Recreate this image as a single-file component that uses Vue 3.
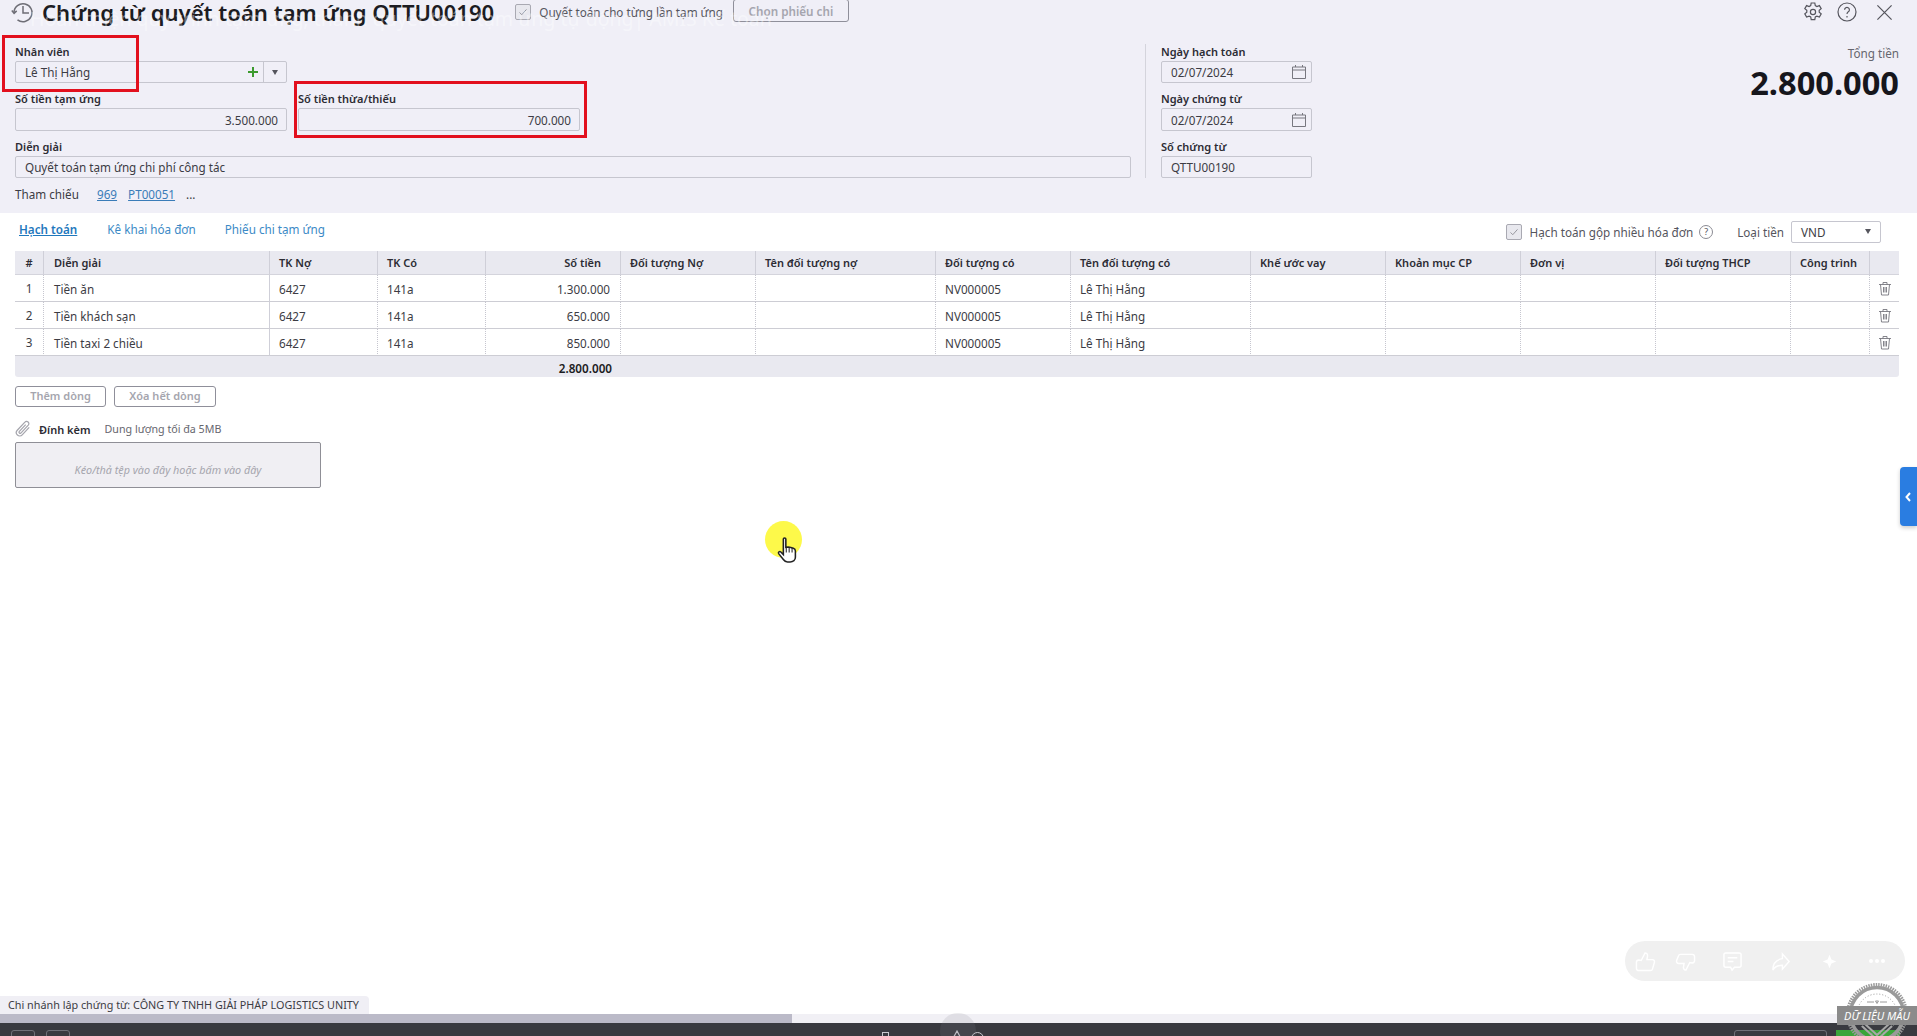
<template>
  <div class="page">
    <header class="head">
      <div class="title-row">
        <svg class="hist" viewBox="0 0 22 22" fill="none" stroke="#6e6e76" stroke-width="1.5">
          <path d="M6.500 18.800A9 9 0 1 0 3 11.500" />
          <path d="M.8 9.500l2.300 2.800 2.600-2.400" />
          <path d="M12 5v7h6" />
        </svg>
        <h1>Chứng từ quyết toán tạm ứng QTTU00190</h1>
        <label class="check top-check">
          <span class="box"><svg viewBox="0 0 16 16" fill="none" stroke="#8b8b93"><path d="M4 8.500l2.600 2.600L12 5" /></svg></span>
          Quyết toán cho từng lần tạm ứng
        </label>
        <button class="ghost pick">Chọn phiếu chi</button>
        <div class="top-icons">
          <svg class="gear" viewBox="0 0 20 20" fill="none" stroke="#55555d" stroke-width="1.2">
            <path d="M8.200 1h3.600l.5 2.600 1.600.9 2.500-.9 1.800 3.100-2 1.700v1.800l2 1.700-1.800 3.100-2.500-.9-1.600.9-.5 2.600H8.200l-.5-2.600-1.600-.9-2.500.9-1.800-3.100 2-1.700V8.400l-2-1.700 1.800-3.100 2.500.9 1.600-.9z" />
            <circle cx="10" cy="10" r="2.600" />
          </svg>
          <svg viewBox="0 0 20 20" fill="none" stroke="#55555d" stroke-width="1.2">
            <circle cx="10" cy="10" r="9" />
            <path d="M7.600 7.800a2.400 2.400 0 1 1 3.700 2c-.9.6-1.300 1-1.300 2.200" />
            <path d="M10 14v1.400" />
          </svg>
          <svg class="close" viewBox="0 0 18 18" fill="none" stroke="#55555d" stroke-width="1.3">
            <path d="M1.500 1.500l15 15M16.500 1.500l-15 15" />
          </svg>
        </div>
      </div>

      <div class="form">
        <div class="form-left">
          <div class="line">
            <div class="field half">
              <label>Nhân viên</label>
              <div class="input combo">
                <span class="grow">Lê Thị Hằng</span>
                <svg class="plus" viewBox="0 0 12 12" stroke="#3c9a2e" stroke-width="2"><path d="M6 1v10M1 6h10" /></svg>
                <span class="caret-cell"><i class="caret"></i></span>
              </div>
            </div>
          </div>
          <div class="line">
            <div class="field half">
              <label>Số tiền tạm ứng</label>
              <div class="input right tall">3.500.000</div>
            </div>
            <div class="field half second">
              <label>Số tiền thừa/thiếu</label>
              <div class="input right tall">700.000</div>
            </div>
          </div>
          <div class="field">
            <label>Diễn giải</label>
            <div class="input">Quyết toán tạm ứng chi phí công tác</div>
          </div>
          <div class="refs">
            <span class="refs-label">Tham chiếu</span>
            <a>969</a>
            <a>PT00051</a>
            <span class="more">...</span>
          </div>
        </div>

        <div class="form-dates">
          <div class="field">
            <label>Ngày hạch toán</label>
            <div class="input date">02/07/2024
              <svg viewBox="0 0 16 16" fill="none" stroke="#77777f"><path d="M1.500 3h13v11.500h-13zM1.500 6h13M4.500 1v2M11.500 1v2" /></svg>
            </div>
          </div>
          <div class="field">
            <label>Ngày chứng từ</label>
            <div class="input date tall">02/07/2024
              <svg viewBox="0 0 16 16" fill="none" stroke="#77777f"><path d="M1.500 3h13v11.500h-13zM1.500 6h13M4.500 1v2M11.500 1v2" /></svg>
            </div>
          </div>
          <div class="field">
            <label>Số chứng từ</label>
            <div class="input">QTTU00190</div>
          </div>
        </div>

        <div class="total">
          <span>Tổng tiền</span>
          <strong>2.800.000</strong>
        </div>
      </div>

      <div class="subtitle">Hoàn thiện quy trình tạm ứng, thanh quyết toán tạm ứng tự động| AMIS Kế toán</div>
      <div class="mark mark-a"></div>
      <div class="mark mark-b"></div>
    </header>

    <main class="body">
      <div class="tabs-row">
        <a class="tab active">Hạch toán</a>
        <a class="tab">Kê khai hóa đơn</a>
        <a class="tab last">Phiếu chi tạm ứng</a>
        <label class="check merge">
          <span class="box"><svg viewBox="0 0 16 16" fill="none" stroke="#8b8b93"><path d="M4 8.500l2.600 2.600L12 5" /></svg></span>
          Hạch toán gộp nhiều hóa đơn
          <span class="hint">?</span>
        </label>
        <span class="currency-label">Loại tiền</span>
        <div class="currency">VND<i class="caret"></i></div>
      </div>

      <table class="grid">
        <colgroup>
          <col v-for="c in columns" :key="c.key" :style="{ width: c.width + 'px' }" />
          <col style="width: 29px" />
        </colgroup>
        <thead>
          <tr>
            <th v-for="c in columns" :key="c.key" :class="c.cls">{{ c.title }}</th>
            <th></th>
          </tr>
        </thead>
        <tbody>
          <tr v-for="(row, i) in rows" :key="i">
            <td class="center">{{ i + 1 }}</td>
            <td>{{ row.text }}</td>
            <td>6427</td>
            <td>141a</td>
            <td class="num">{{ row.amount }}</td>
            <td></td>
            <td></td>
            <td>NV000005</td>
            <td>Lê Thị Hằng</td>
            <td v-for="n in 5" :key="n"></td>
            <td class="trash-cell">
              <svg class="trash" viewBox="0 0 14 15" fill="none" stroke="#77777f" stroke-width="0.9">
                <path d="M1 3.500h12M5 3.500V1.500h4v2M2.500 3.500l1 10.500h7l1-10.500M5.500 6v5.500M7 6v5.500M8.500 6v5.500" />
              </svg>
            </td>
          </tr>
        </tbody>
        <tfoot>
          <tr>
            <td colspan="4"></td>
            <td class="num strong">2.800.000</td>
            <td colspan="10"></td>
          </tr>
        </tfoot>
      </table>

      <div class="actions">
        <button class="ghost add">Thêm dòng</button>
        <button class="ghost clear">Xóa hết dòng</button>
      </div>

      <div class="attach-head">
        <svg viewBox="0 0 16 16" fill="none" stroke="#a5a5ad" stroke-width="1.1">
          <path d="M13.500 6.500l-6.200 6.700a3 3 0 0 1-4.400-4.100l6.800-7.200a2 2 0 0 1 3 2.700l-6.600 7a1 1 0 0 1-1.500-1.300l5.800-6.200" />
        </svg>
        <b>Đính kèm</b>
        <span>Dung lượng tối đa 5MB</span>
      </div>
      <div class="drop">Kéo/thả tệp vào đây hoặc bấm vào đây</div>
    </main>

    <footer class="foot">
      <div class="branch">Chi nhánh lập chứng từ: CÔNG TY TNHH GIẢI PHÁP LOGISTICS UNITY</div>
      <div class="scroll"><div class="thumb"></div></div>
      <div class="taskbar">
        <span class="task-a"></span>
        <span class="task-b"></span>
        <span class="task-doc"></span>
        <svg class="task-tri" viewBox="0 0 14 14" fill="none" stroke="#c9c9cf" stroke-width="1.2"><path d="M7 1L1 12h12z" /></svg>
        <span class="task-ring"></span>
        <span class="task-out"></span>
        <span class="task-green"></span>
      </div>
    </footer>

    <div class="home-pill"></div>

    <div class="side-tab">
      <svg viewBox="0 0 6 10" fill="none" stroke="#fff" stroke-width="2"><path d="M5 1L1.500 5 5 9" /></svg>
    </div>

    <div class="pointer">
      <svg viewBox="0 0 20 26">
        <path d="M6 2c0-1.400 2.400-1.400 2.400 0v8l2.400-.4 2.400.5 2.400.7c1.400.5 2 1.200 2 2.800v6c0 2.600-2.200 4.400-5 4.400H10c-2 0-3-1-4-2.400L1.500 16c-.8-1.300.9-2.700 2.100-1.500L6 17z" fill="#fff" stroke="#222" stroke-width="1.500" />
        <path d="M8.800 10v5M11.600 10v5M14.400 10.500V15" stroke="#222" fill="none" />
      </svg>
    </div>

    <div class="reactions">
      <svg viewBox="0 0 22 22"><path d="M6.500 10L10.500 2c2.500 0 3 2 2.500 4L12.500 9h5.500c2 0 2.800 1.500 2.300 3l-2 7c-.3 1-1 1.500-2 1.500H4c-1.500 0-2.500-1-2.500-2.500v-6c0-1.500 1-2.500 2.500-2.500z" /></svg>
      <svg viewBox="0 0 22 22"><path d="M15.500 12l-4 8c-2.500 0-3-2-2.500-4l.5-3H4c-2 0-2.800-1.500-2.300-3l2-5c.3-1 1-1.500 2-1.500H18c1.500 0 2.500 1 2.500 2.500v4c0 1.500-1 2.500-2.500 2.500z" /></svg>
      <svg viewBox="0 0 22 22"><path d="M4 2h14c1.200 0 2 .8 2 2v11c0 1.200-.8 2-2 2h-5l-2.500 3L9 17H4c-1.200 0-2-.8-2-2V4c0-1.200.8-2 2-2zM6 7h10M6 11h6" /></svg>
      <svg viewBox="0 0 22 22"><path d="M13 3l7 8-7 8v-4c-5 0-8 1-10 5 0-7 4-11 10-12z" /></svg>
      <svg viewBox="0 0 22 22" class="solid"><path d="M11 1l2.800 7.200L21 11l-7.200 2.800L11 21l-2.800-7.200L1 11l7.200-2.800z" /></svg>
      <span class="dots"><i></i><i></i><i></i></span>
    </div>

    <div class="stamp">
      <svg viewBox="0 0 64 64" fill="none">
        <circle cx="32" cy="32" r="29.500" stroke="#9a9a9a" stroke-width="3" stroke-dasharray="1.500 1" />
        <circle cx="32" cy="32" r="26.500" stroke="#9a9a9a" stroke-width="3.500" />
        <circle cx="32" cy="32" r="20" stroke="#9a9a9a" stroke-width="1" stroke-dasharray="1 2" />
        <path d="M22 20h7M35 20h7M30.500 19h3l-1.500 2.500z" stroke="#9a9a9a" />
        <path d="M17 44l15 14 15-14M20 42l12 11 12-11" stroke="#a8a8a8" stroke-width="2" />
      </svg>
      <span>DỮ LIỆU MẪU</span>
    </div>
  </div>
</template>

<script setup>
const columns = [
  { key: 'no', title: '#', width: 29, cls: 'center' },
  { key: 'desc', title: 'Diễn giải', width: 226 },
  { key: 'debit', title: 'TK Nợ', width: 108 },
  { key: 'credit', title: 'TK Có', width: 108 },
  { key: 'amount', title: 'Số tiền', width: 135, cls: 'num' },
  { key: 'obj1', title: 'Đối tượng Nợ', width: 135 },
  { key: 'name1', title: 'Tên đối tượng nợ', width: 180 },
  { key: 'obj2', title: 'Đối tượng có', width: 135 },
  { key: 'name2', title: 'Tên đối tượng có', width: 180 },
  { key: 'loan', title: 'Khế ước vay', width: 135 },
  { key: 'cost', title: 'Khoản mục CP', width: 135 },
  { key: 'unit', title: 'Đơn vị', width: 135 },
  { key: 'thcp', title: 'Đối tượng THCP', width: 135 },
  { key: 'work', title: 'Công trình', width: 79 }
]

const rows = [
  { text: 'Tiền ăn', amount: '1.300.000' },
  { text: 'Tiền khách sạn', amount: '650.000' },
  { text: 'Tiền taxi 2 chiều', amount: '850.000' }
]
</script>

<style>
html, body {
  margin: 0;
  background: #fff;
}
</style>

<style scoped>
.page {
  position: relative;
  display: flex;
  flex-direction: column;
  height: 1036px;
  overflow: hidden;
  background: #fff;
  font-family: "Noto Sans", sans-serif;
  font-size: 11.700px;
  color: #3c3c44;
}

.head {
  height: 213px;
  background: #f0eff7;
  box-sizing: border-box;
  flex: none;
}

.title-row {
  display: flex;
  align-items: center;
  height: 24px;
}

.hist {
  width: 22px;
  height: 22px;
  margin-left: 11px;
}

h1 {
  margin: 0 0 0 9px;
  font-size: 22.100px;
  line-height: 24px;
  font-weight: 600;
  color: #1c1c22;
  white-space: nowrap;
}

.subtitle {
  position: absolute;
  left: 30px;
  top: 8px;
  font-size: 19.500px;
  line-height: 22px;
  color: rgba(255, 255, 255, 0.4);
  white-space: nowrap;
}

.check {
  display: flex;
  align-items: center;
  gap: 8px;
  font-size: 11.700px;
  color: #55555d;
  white-space: nowrap;
}

.box {
  display: block;
  box-sizing: border-box;
  width: 16px;
  height: 16px;
  border: 1px solid #a9a9b2;
  border-radius: 2px;
  background: #e8e8ee;
}

.box svg {
  display: block;
}

.top-check {
  margin-left: 21px;
}

.ghost {
  background: transparent;
  border: 1px solid #8f8f9a;
  border-radius: 3px;
  font-family: inherit;
  font-size: 11.700px;
  font-weight: 600;
  color: #a5a5ae;
  padding: 0;
}

.pick {
  width: 116px;
  height: 23px;
  margin-left: 10px;
  margin-top: -3px;
}

.top-icons {
  display: flex;
  align-items: center;
  gap: 15px;
  margin-left: auto;
  margin-right: 24px;
}

.top-icons svg {
  width: 20px;
  height: 20px;
  display: block;
}

.top-icons .gear {
  margin-right: -1px;
}

.top-icons .close {
  width: 17px;
  height: 17px;
  margin-left: 4px;
}

.form {
  display: flex;
  padding: 20px 18px 0 15px;
}

.form-left {
  width: 1116px;
  padding-right: 14px;
  border-right: 1px solid #d4d4dc;
  height: 134px;
  flex: none;
}

.line {
  display: flex;
}

.field {
  display: flex;
  flex-direction: column;
}

.field label {
  font-size: 11px;
  font-weight: 600;
  color: #2c2c34;
  line-height: 16px;
  height: 17px;
}

.input {
  box-sizing: border-box;
  display: flex;
  align-items: center;
  height: 22px;
  margin-bottom: 8px;
  padding: 0 9px;
  border: 1px solid #c6c6cf;
  border-radius: 2px;
  background: #f0eff7;
  font-size: 11.700px;
  color: #3c3c44;
}

.tall {
  height: 23px;
}

.half {
  width: 272px;
}

.second {
  width: 282px;
  margin-left: 11px;
}

.right {
  justify-content: flex-end;
  padding-right: 8px;
}

.combo {
  padding-right: 0;
  background: #f0eff7;
}

.grow {
  flex: 1;
}

.plus {
  width: 12px;
  height: 12px;
  margin-right: 4px;
}

.caret-cell {
  display: flex;
  align-items: center;
  justify-content: center;
  width: 22px;
  height: 100%;
  border-left: 1px solid #c6c6cf;
}

.caret {
  display: block;
  width: 0;
  height: 0;
  border-left: 3.500px solid transparent;
  border-right: 3.500px solid transparent;
  border-top: 5px solid #55555d;
}

.refs {
  display: flex;
  align-items: center;
  height: 20px;
  margin-top: -2px;
  font-size: 11.700px;
}

.refs-label {
  width: 82px;
}

.refs a {
  margin-right: 11px;
  color: #3a7cb8;
  text-decoration: underline;
}

.form-dates {
  width: 151px;
  margin-left: 15px;
  flex: none;
}

.date {
  justify-content: space-between;
  padding-right: 4px;
}

.date svg {
  width: 16px;
  height: 16px;
}

.total {
  display: flex;
  flex-direction: column;
  align-items: flex-end;
  flex: 1;
  margin-top: 1px;
}

.total span {
  font-size: 11.700px;
  color: #66666e;
}

.total strong {
  font-size: 32.600px;
  line-height: 40px;
  margin-top: 2px;
  font-weight: 700;
  color: #16161c;
}

.mark {
  position: absolute;
  box-sizing: border-box;
  border: 3px solid #e2101e;
}

.mark-a {
  left: 2px;
  top: 35px;
  width: 137px;
  height: 57px;
}

.mark-b {
  left: 294px;
  top: 81px;
  width: 293px;
  height: 57px;
}

.body {
  flex: 1;
  padding: 0 18px 0 15px;
}

.tabs-row {
  box-sizing: border-box;
  display: flex;
  align-items: center;
  height: 38px;
  padding-bottom: 1px;
  font-size: 11.700px;
}

.tab {
  margin-left: 4px;
  margin-right: 26px;
  margin-bottom: 6px;
  color: #3c8ac6;
  white-space: nowrap;
}

.tab.last {
  margin-left: 3px;
}

.tab.active {
  font-weight: 600;
  color: #1f78bd;
  text-decoration: underline;
}

.merge {
  margin-left: auto;
  color: #55555d;
}

.hint {
  display: flex;
  align-items: center;
  justify-content: center;
  width: 14px;
  height: 14px;
  border: 1px solid #8b8b93;
  border-radius: 50%;
  font-size: 9px;
  box-sizing: border-box;
  margin-left: -2px;
}

.currency-label {
  margin-left: 24px;
  color: #55555d;
}

.currency {
  box-sizing: border-box;
  display: flex;
  align-items: center;
  justify-content: space-between;
  width: 90px;
  height: 22px;
  margin-left: 7px;
  margin-right: 18px;
  padding: 0 9px;
  border: 1px solid #c6c6cf;
  border-radius: 2px;
}

.grid {
  width: 1884px;
  table-layout: fixed;
  border-collapse: separate;
  border-spacing: 0;
}

.grid th {
  box-sizing: border-box;
  height: 24px;
  padding: 0 9px;
  background: #e9e9f0;
  border-right: 1px solid #cfcfd8;
  border-bottom: 1px solid #d4d4dc;
  text-align: left;
  font-size: 11px;
  font-weight: 600;
  color: #2c2c34;
  white-space: nowrap;
}

.grid td {
  box-sizing: border-box;
  height: 27px;
  padding: 2px 9px 0;
  border-right: 1px dotted #c6c6cf;
  border-bottom: 1px solid #cdcdd4;
  font-size: 11.700px;
  color: #3c3c44;
  white-space: nowrap;
}

.grid th:last-child,
.grid td:last-child {
  border-right: 0;
}

.grid th:nth-child(2),
.grid tbody td:nth-child(2) {
  padding-left: 10px;
}

.grid tbody td:nth-child(2) {
  border-right: 1px solid #cfcfd8;
}

.grid th.center,
.grid td.center {
  text-align: center;
  padding: 0;
}

.grid th.num {
  text-align: right;
  padding-right: 19px;
}

.grid td.num {
  text-align: right;
  padding-right: 10px;
}

.trash-cell {
  padding: 0 !important;
  text-align: center;
}

.trash {
  width: 14px;
  height: 15px;
  display: block;
  margin: 0 auto 0 8px;
}

.grid tfoot td {
  height: 21px;
  background: #e9e9f0;
  border: 0;
}

.grid tfoot td:first-child {
  border-bottom-left-radius: 3px;
}

.grid tfoot td:last-child {
  border-bottom-right-radius: 3px;
}

.grid tfoot td.strong {
  padding-right: 9px;
  font-weight: 600;
  color: #1c1c22;
}

.actions {
  display: flex;
  gap: 8px;
  margin-top: 9px;
}

.actions .ghost {
  height: 21px;
  padding-bottom: 2px;
  font-size: 11px;
}

.add {
  width: 91px;
}

.clear {
  width: 102px;
}

.attach-head {
  display: flex;
  align-items: center;
  height: 18px;
  margin-top: 13px;
  font-size: 10.700px;
}

.attach-head svg {
  width: 18px;
  height: 18px;
  margin-left: -1px;
}

.attach-head b {
  margin-left: 7px;
  font-size: 11px;
  font-weight: 600;
  color: #2c2c34;
}

.attach-head span {
  margin-left: 14px;
  color: #66666e;
}

.drop {
  box-sizing: border-box;
  display: flex;
  align-items: center;
  justify-content: center;
  width: 306px;
  height: 46px;
  margin-top: 4px;
  padding-top: 8px;
  border: 1px solid #8f8f96;
  border-radius: 2px;
  background: #f0eff3;
  font-size: 10.800px;
  font-style: italic;
  color: #a5a5ad;
}

.foot {
  flex: none;
}

.branch {
  display: inline-block;
  box-sizing: border-box;
  width: 369px;
  height: 18px;
  padding-left: 8px;
  background: #f0eff5;
  border-top-right-radius: 4px;
  font-size: 10.800px;
  line-height: 17px;
  color: #3c3c44;
  white-space: nowrap;
  vertical-align: bottom;
}

.scroll {
  height: 9px;
  background: #f1f0f5;
}

.thumb {
  width: 792px;
  height: 100%;
  background: #bbbac8;
}

.taskbar {
  display: flex;
  align-items: flex-start;
  height: 13px;
  overflow: hidden;
  background: #393a40;
}

.taskbar > * {
  flex: none;
  box-sizing: border-box;
}

.task-a,
.task-b {
  width: 24px;
  height: 12px;
  margin-top: 7px;
  border: 1px solid #6f7078;
  border-radius: 3px;
}

.task-a {
  margin-left: 11px;
}

.task-b {
  margin-left: 11px;
}

.task-doc {
  width: 7px;
  height: 10px;
  margin-top: 9px;
  margin-left: 812px;
  border: 1px solid #c9c9cf;
}

.task-tri {
  width: 14px;
  height: 14px;
  margin-top: 7px;
  margin-left: 61px;
}

.task-ring {
  width: 13px;
  height: 13px;
  margin-top: 9px;
  margin-left: 7px;
  border: 1.500px solid #c9c9cf;
  border-radius: 50%;
}

.task-out {
  width: 93px;
  height: 12px;
  margin-top: 7px;
  margin-left: 750px;
  border: 1px solid #6f7078;
  border-radius: 3px;
}

.task-green {
  width: 64px;
  height: 12px;
  margin-top: 7px;
  margin-left: 9px;
  background: #3aa53a;
}

.home-pill {
  position: absolute;
  left: 940px;
  top: 1013px;
  width: 36px;
  height: 36px;
  border-radius: 50%;
  background: rgba(130, 130, 140, 0.16);
}

.side-tab {
  position: absolute;
  left: 1900px;
  top: 467px;
  display: flex;
  align-items: center;
  box-sizing: border-box;
  width: 17px;
  height: 59px;
  padding-left: 5px;
  background: #2a7de1;
  border-radius: 4px 0 0 4px;
  box-shadow: 0 2px 4px rgba(0, 0, 0, 0.2);
}

.side-tab svg {
  width: 6px;
  height: 10px;
}

.pointer {
  position: absolute;
  left: 765px;
  top: 521px;
  width: 37px;
  height: 37px;
  border-radius: 50%;
  background: #fdf94a;
}

.pointer svg {
  position: absolute;
  left: 12px;
  top: 16px;
  width: 21px;
  height: 27px;
}

.reactions {
  position: absolute;
  left: 1625px;
  top: 941px;
  display: flex;
  align-items: center;
  box-sizing: border-box;
  width: 280px;
  height: 40px;
  padding-left: 10px;
  background: #f0f0f0;
  border-radius: 20px;
}

.reactions svg {
  flex: none;
  width: 21px;
  height: 21px;
  fill: none;
  stroke: #fff;
  stroke-width: 1.500;
}

.reactions svg:nth-child(2) {
  margin-left: 19px;
}

.reactions svg:nth-child(3) {
  margin-left: 26px;
}

.reactions svg:nth-child(4) {
  margin-left: 27px;
}

.reactions .solid {
  width: 15px;
  height: 15px;
  margin-left: 31px;
  fill: #fff;
  stroke: none;
}

.dots {
  display: flex;
  gap: 2px;
  margin-left: 32px;
}

.dots i {
  width: 4px;
  height: 4px;
  border-radius: 50%;
  background: #fff;
}

.stamp {
  position: absolute;
  left: 1837px;
  top: 982px;
  width: 80px;
  height: 54px;
}

.stamp svg {
  position: absolute;
  left: 8px;
  top: 0;
  width: 64px;
  height: 64px;
}

.stamp span {
  position: absolute;
  left: 0;
  top: 24px;
  width: 80px;
  height: 19px;
  background: #8b8b8b;
  color: #fff;
  font-size: 11px;
  font-style: italic;
  line-height: 19px;
  text-align: center;
  white-space: nowrap;
}
</style>
